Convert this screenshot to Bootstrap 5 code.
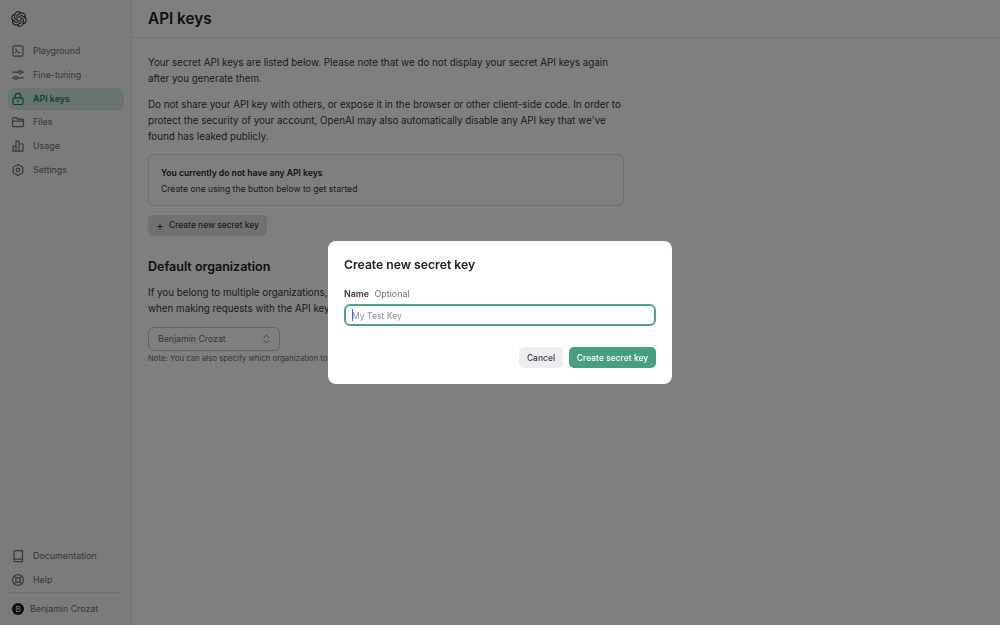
<!DOCTYPE html>
<html lang="en">
<head>
  <meta charset="UTF-8">
  <title>API keys</title>
  <link href="https://cdn.jsdelivr.net/npm/bootstrap@5.3.3/dist/css/bootstrap.min.css" rel="stylesheet">
  <style>
    body { font-family: Inter, "Liberation Sans", sans-serif; font-size: 9.8px; line-height: 16px; color: #353740; height: 625px; overflow: hidden; background: #fff; }
    .side-bar { width: 132px; height: 625px; border-right: 1px solid #ececf1; padding: 8px 7px 1px 8px; flex: none; background: #f7f7f8; }
    .side-logo { width: 16px; height: 16px; margin: 3px 0 13px 2.5px; display: block; color: #202123; }
    .side-link { display: flex; align-items: center; height: 22px; margin-bottom: 1.8px; padding-left: 3px; gap: 8px; color: #6e6e80; font-size: 8.9px; border-radius: 6px; text-decoration: none; }
    .side-link svg { width: 14px; height: 14px; flex: none; fill: none; stroke: currentColor; stroke-width: 1.2; stroke-linecap: round; stroke-linejoin: round; }
    .side-link.is-on { background: #d4e9e0; color: #1a7f64; font-weight: 600; }
    .side-user { border-top: 1px solid #e5e5e9; height: 32px; margin-top: -1px; display: flex; align-items: center; gap: 6px; padding-left: 4px; font-size: 8.8px; color: #6e6e80; }
    .user-dot { width: 12px; height: 12px; border-radius: 50%; background: #202123; color: #fff; font-size: 8px; line-height: 12px; text-align: center; }
    .top-bar { height: 38px; border-bottom: 1px solid #e5e5e9; padding: 1px 0 0 16px; display: flex; align-items: center; }
    .top-bar h1 { font-size: 15.3px; font-weight: 600; margin: 0; color: #202123; }
    .page-body { padding: 17px 16px 0; width: 508px; }
    .page-body p { margin: 0 0 10px; }
    .empty-box { height: 52px; border: 1px solid #d9d9e3; border-radius: 6px; padding: 10px 12px; font-size: 8.6px; margin-top: -1px; margin-bottom: 9px; }
    .empty-box strong { color: #202123; font-weight: 600; display: block; }
    .new-key { background: #e3e3e8; color: #353740; border: 0; height: 21px; width: 119px; padding: 0 0 0 8px; border-radius: 5px; font-size: 8.45px; line-height: 21px; font-weight: 500; gap: 5px; }
    .new-key span { font-size: 12px; font-weight: 400; width: 8px; text-align: center; }
    .page-body h2 { font-size: 12.5px; line-height: 20px; font-weight: 600; color: #202123; margin: 21px 0 8px; }
    .line-keep { white-space: nowrap; }
    .org-pick { width: 132px; height: 24px; border: 1px solid #c5c5d2; border-radius: 6px; padding: 0 9px; font-size: 8.75px; color: #6e6e80; margin-top: 10px; }
    .org-note { font-size: 7.8px; line-height: 14px; color: #6e6e80; white-space: nowrap; }
    .modal-dialog.key-dialog { max-width: 344px; margin: 0 auto; min-height: 625px; }
    .key-dialog .modal-content { border: 0; border-radius: 8px; padding: 16px; height: 143px; }
    .key-dialog h3 { font-size: 12.2px; line-height: 16px; font-weight: 600; color: #202123; margin: 0 0 13px; }
    .key-label { font-size: 8.9px; line-height: 16px; margin-bottom: 2px; color: #6e6e80; }
    .key-label b { font-weight: 600; color: #353740; margin-right: 3px; }
    .key-field { position: relative; }
    .key-input.form-control { height: 22px; padding: 1px 6px 0; font-size: 8.6px; line-height: 18px; border: 2px solid #4ea286; border-radius: 6px; box-shadow: none; }
    .key-input::placeholder { color: #8e8ea0; opacity: 1; }
    .key-caret { position: absolute; left: 8px; top: 5px; width: 1px; height: 12px; background: #3a6ee0; }
    .key-actions { margin-top: 21px; gap: 6px; }
    .btn.act-cancel, .btn.act-save { height: 21px; padding: 1px 0 0; font-size: 8.5px; line-height: 20px; border: 0; border-radius: 5px; font-weight: 500; }
    .btn.act-cancel { background: #ececf1; color: #353740; width: 44px; }
    .btn.act-save { background: #46a080; color: #fff; width: 87px; }
  </style>
</head>
<body>
  <div class="d-flex">
    <aside class="side-bar d-flex flex-column">
      <svg class="side-logo" viewBox="0 0 41 41" fill="currentColor"><path d="M37.5324 16.8707C37.9808 15.5241 38.1363 14.0974 37.9886 12.6859C37.8409 11.2744 37.3934 9.91076 36.676 8.68622C35.6126 6.83404 33.9882 5.3676 32.0373 4.4985C30.0864 3.62941 27.9098 3.40259 25.8215 3.85078C24.8796 2.7893 23.7219 1.94125 22.4257 1.36341C21.1295 0.785575 19.7249 0.491269 18.3058 0.500197C16.1708 0.495044 14.0893 1.16803 12.3614 2.42214C10.6335 3.67624 9.34853 5.44666 8.6917 7.47815C7.30085 7.76286 5.98686 8.3414 4.8377 9.17505C3.68854 10.0087 2.73073 11.0782 2.02839 12.312C0.956464 14.1591 0.498905 16.2988 0.721698 18.4228C0.944492 20.5467 1.83612 22.5449 3.268 24.1293C2.81966 25.4759 2.66413 26.9026 2.81182 28.3141C2.95951 29.7256 3.40701 31.0892 4.12437 32.3138C5.18791 34.1659 6.8123 35.6322 8.76321 36.5013C10.7141 37.3704 12.8907 37.5973 14.9789 37.1492C15.9208 38.2107 17.0786 39.0587 18.3747 39.6366C19.6709 40.2144 21.0755 40.5087 22.4946 40.4998C24.6307 40.5054 26.7133 39.8321 28.4418 38.5772C30.1704 37.3223 31.4556 35.5506 32.1119 33.5179C33.5027 33.2332 34.8167 32.6547 35.9659 31.821C37.115 30.9874 38.0728 29.9178 38.7752 28.684C39.8458 26.8371 40.3023 24.6979 40.0789 22.5748C39.8556 20.4517 38.9639 18.4544 37.5324 16.8707ZM22.4978 37.8849C20.7443 37.8874 19.0459 37.2733 17.6994 36.1501C17.7601 36.117 17.8666 36.0586 17.936 36.0161L25.9004 31.4156C26.1003 31.3019 26.2663 31.137 26.3813 30.9378C26.4964 30.7386 26.5563 30.5124 26.5549 30.2825V19.0542L29.9213 20.998C29.9389 21.0068 29.9541 21.0198 29.9656 21.0359C29.977 21.052 29.9842 21.0707 29.9867 21.0902V30.3889C29.9842 32.375 29.1946 34.2791 27.7909 35.6841C26.3872 37.0892 24.4838 37.8806 22.4978 37.8849ZM6.39227 31.0064C5.51397 29.4888 5.19742 27.7107 5.49804 25.9832C5.55718 26.0187 5.66048 26.0818 5.73461 26.1244L13.699 30.7248C13.8975 30.8408 14.1233 30.902 14.3532 30.902C14.583 30.902 14.8088 30.8408 15.0073 30.7248L24.731 25.1103V28.9979C24.7321 29.0177 24.7283 29.0376 24.7199 29.0556C24.7115 29.0736 24.6988 29.0893 24.6829 29.1012L16.6317 33.7497C14.9096 34.7416 12.8643 35.0097 10.9447 34.4954C9.02506 33.9811 7.38785 32.7263 6.39227 31.0064ZM4.29707 13.6194C5.17156 12.0998 6.55279 10.9364 8.19885 10.3327C8.19885 10.4013 8.19491 10.5228 8.19491 10.6071V19.808C8.19351 20.0378 8.25334 20.2638 8.36823 20.4629C8.48312 20.6619 8.64893 20.8267 8.84863 20.9404L18.5723 26.5542L15.206 28.4979C15.1894 28.5089 15.1703 28.5155 15.1505 28.5173C15.1307 28.5191 15.1107 28.516 15.0924 28.5082L7.04046 23.8557C5.32135 22.8601 4.06716 21.2235 3.55289 19.3046C3.03862 17.3858 3.30624 15.3413 4.29707 13.6194ZM31.955 20.0556L22.2312 14.4411L25.5976 12.4981C25.6142 12.4872 25.6333 12.4805 25.6531 12.4787C25.6729 12.4769 25.6928 12.4801 25.7111 12.4879L33.7631 17.1364C34.9967 17.849 36.0017 18.8982 36.6606 20.1613C37.3194 21.4244 37.6047 22.849 37.4832 24.2684C37.3617 25.6878 36.8382 27.0432 35.9743 28.1759C35.1103 29.3086 33.9415 30.1717 32.6047 30.6641C32.6047 30.5947 32.6047 30.4733 32.6047 30.3889V21.188C32.6066 20.9586 32.5474 20.7328 32.4332 20.5338C32.319 20.3348 32.154 20.1698 31.955 20.0556ZM35.3055 15.0128C35.2464 14.9765 35.1431 14.9142 35.069 14.8717L27.1045 10.2712C26.906 10.1554 26.6803 10.0943 26.4504 10.0943C26.2206 10.0943 25.9948 10.1554 25.7963 10.2712L16.0726 15.8858V11.9982C16.0715 11.9783 16.0753 11.9585 16.0837 11.9405C16.0921 11.9225 16.1048 11.9068 16.1207 11.8949L24.1719 7.25025C25.4053 6.53903 26.8158 6.19376 28.2383 6.25482C29.6608 6.31589 31.0364 6.78077 32.2044 7.59508C33.3723 8.40939 34.2842 9.53945 34.8334 10.8531C35.3826 12.1667 35.5464 13.6095 35.3055 15.0128ZM14.2424 21.9419L10.8752 19.9981C10.8576 19.9893 10.8423 19.9763 10.8309 19.9602C10.8195 19.9441 10.8122 19.9254 10.8098 19.9058V10.6071C10.8107 9.18295 11.2173 7.78848 11.9819 6.58696C12.7466 5.38544 13.8377 4.42659 15.1275 3.82264C16.4173 3.21869 17.8524 2.99464 19.2649 3.1767C20.6775 3.35876 22.0089 3.93941 23.1034 4.85067C23.0427 4.88379 22.937 4.94215 22.8668 4.98473L14.9024 9.58517C14.7025 9.69878 14.5366 9.86356 14.4215 10.0626C14.3065 10.2616 14.2466 10.4877 14.2479 10.7175L14.2424 21.9419ZM16.071 17.9991L20.4018 15.4978L24.7325 17.9975V22.9985L20.4018 25.4983L16.071 22.9985V17.9991Z"/></svg>
      <a class="side-link" href="#"><svg viewBox="0 0 14 14"><rect x="2" y="1.8" width="10" height="10.4" rx="1.2"/><path d="M4.6 5.2 6.2 6.8 4.6 8.4M7 8.6h2"/></svg>Playground</a>
      <a class="side-link" href="#"><svg viewBox="0 0 14 14"><path d="M1.5 4.2h6M10.5 4.2h2M1.5 9.8h2M6.5 9.8h6"/><circle cx="9" cy="4.2" r="1.5"/><circle cx="5" cy="9.8" r="1.5"/></svg>Fine-tuning</a>
      <a class="side-link is-on" href="#"><svg viewBox="0 0 14 14"><rect x="2" y="5.8" width="10" height="6.7" rx="1.2"/><path d="M4.2 5.8V4.2a2.8 2.8 0 0 1 5.6 0v1.6M7 8.4v1.4"/></svg>API keys</a>
      <a class="side-link" href="#"><svg viewBox="0 0 14 14"><path d="M1.5 3.6a1 1 0 0 1 1-1h2.8l1.2 1.6h5a1 1 0 0 1 1 1v5.4a1 1 0 0 1-1 1h-9a1 1 0 0 1-1-1zM1.5 6.2h11"/></svg>Files</a>
      <a class="side-link" href="#"><svg viewBox="0 0 14 14"><path d="M2 7.2h3v5H2zM5 2.2h3v10H5zM8 5h4v7.2H8z"/></svg>Usage</a>
      <a class="side-link" href="#"><svg viewBox="0 0 14 14"><path d="M7 1.5l4.8 2.75v5.5L7 12.5 2.2 9.75v-5.5z"/><circle cx="7" cy="7" r="1.8"/></svg>Settings</a>
      <div class="mt-auto">
        <a class="side-link" href="#"><svg viewBox="0 0 14 14"><path d="M3 2.8a1.2 1.2 0 0 1 1.2-1.2H11.5v8.6H4.2A1.2 1.2 0 0 0 3 11.4zM3 11.4a1.2 1.2 0 0 0 1.2 1.2h7.3v-2.4"/></svg>Documentation</a>
        <a class="side-link" href="#"><svg viewBox="0 0 14 14"><circle cx="7" cy="7" r="5.4"/><circle cx="7" cy="7" r="2.3"/><path d="M3.2 3.2 5.4 5.4M10.8 3.2 8.6 5.4M3.2 10.8 5.4 8.6M10.8 10.8 8.6 8.6"/></svg>Help</a>
        <div class="side-user"><span class="user-dot">B</span>Benjamin Crozat</div>
      </div>
    </aside>
    <main class="flex-grow-1">
      <div class="top-bar"><h1>API keys</h1></div>
      <div class="page-body">
        <p>Your secret API keys are listed below. Please note that we do not display your secret API keys again after you generate them.</p>
        <p>Do not share your API key with others, or expose it in the browser or other client-side code. In order to protect the security of your account, OpenAI may also automatically disable any API key that we've found has leaked publicly.</p>
        <div class="empty-box"><strong>You currently do not have any API keys</strong>Create one using the button below to get started</div>
        <button class="btn new-key d-flex align-items-center" type="button"><span>+</span>Create new secret key</button>
        <h2>Default organization</h2>
        <p class="mb-0 line-keep">If you belong to multiple organizations,<br>when making requests with the API key</p>
        <div class="org-pick d-flex align-items-center justify-content-between">Benjamin Crozat
          <svg width="7" height="10" viewBox="0 0 8 11" fill="none" stroke="currentColor" stroke-width=".9" stroke-linecap="round" stroke-linejoin="round"><path d="M1 4 4 1l3 3M1 7l3 3 3-3"/></svg>
        </div>
        <div class="org-note">Note: You can also specify which organization to</div>
      </div>
    </main>
  </div>

  <div class="modal-backdrop show"></div>
  <div class="modal d-block" tabindex="-1">
    <div class="modal-dialog modal-dialog-centered key-dialog">
      <div class="modal-content">
        <h3>Create new secret key</h3>
        <div class="key-label"><b>Name</b> Optional</div>
        <div class="key-field">
          <input class="form-control key-input" type="text" placeholder="My Test Key">
          <span class="key-caret"></span>
        </div>
        <div class="key-actions d-flex justify-content-end">
          <button class="btn act-cancel" type="button">Cancel</button>
          <button class="btn act-save" type="button">Create secret key</button>
        </div>
      </div>
    </div>
  </div>
  <script src="https://cdn.jsdelivr.net/npm/bootstrap@5.3.3/dist/js/bootstrap.bundle.min.js"></script>
</body>
</html>
